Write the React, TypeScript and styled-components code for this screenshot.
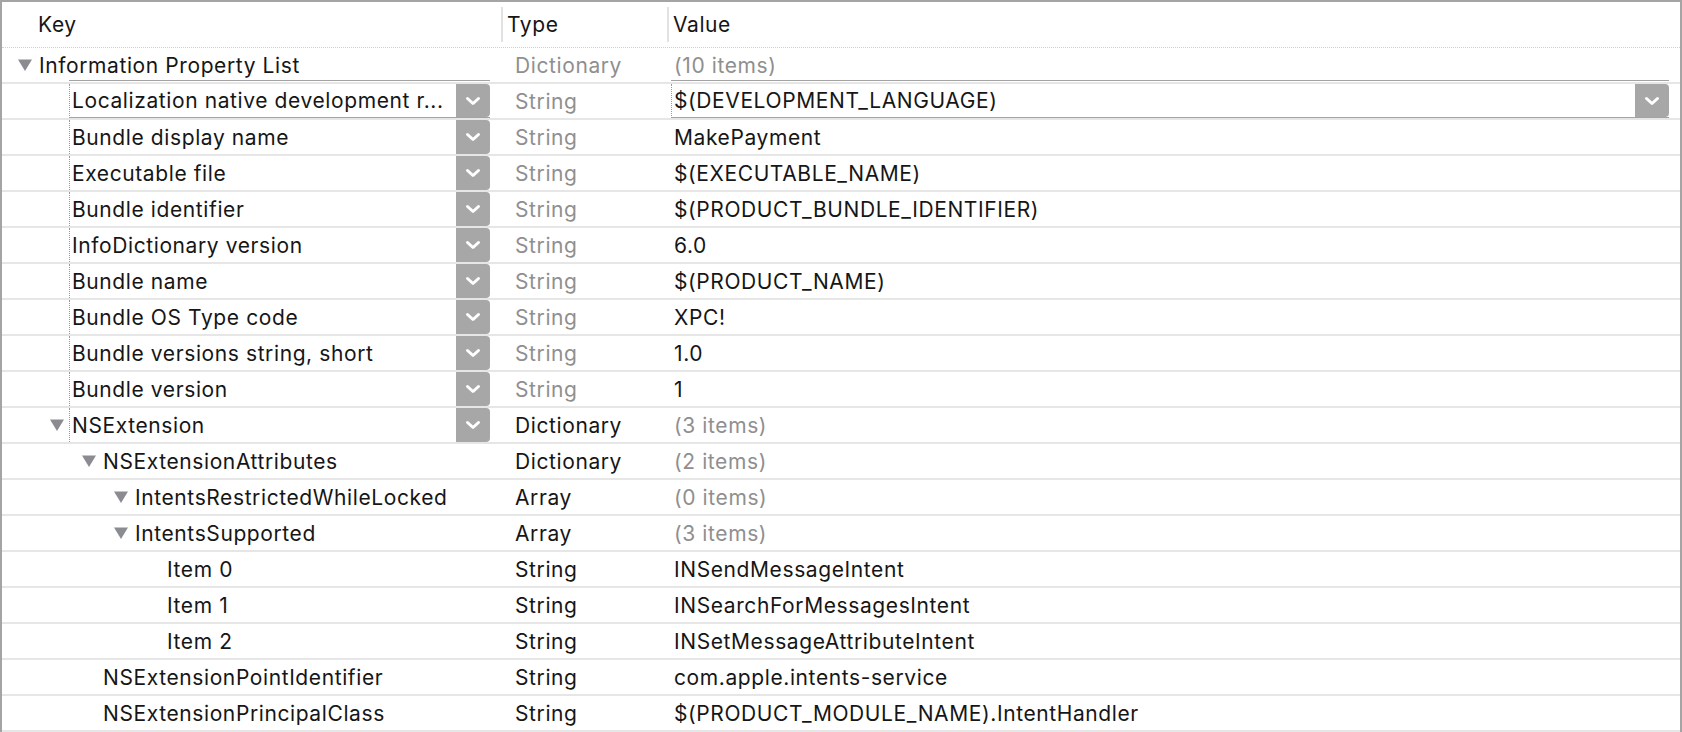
import React from "react";
import styled, { createGlobalStyle, css } from "styled-components";

const GlobalStyle = createGlobalStyle`
  html, body {
    margin: 0;
    padding: 0;
    background: #ffffff;
    overflow: hidden;
  }
  body {
    font-family: Inter, "Liberation Sans", Arial, sans-serif;
    -webkit-font-smoothing: antialiased;
  }
`;

const COLS = "499px 166px 1fr";

const Frame = styled.div`
  box-sizing: border-box;
  width: 1682px;
  height: 732px;
  border-top: 2px solid #a4a4a4;
  border-left: 2px solid #a4a4a4;
  border-right: 2px solid #a4a4a4;
  background: #ffffff;
  overflow: hidden;
  font-size: 21px;
  letter-spacing: 0.6px;
  color: #161616;
`;

const Header = styled.div`
  display: grid;
  grid-template-columns: ${COLS};
  height: 46px;
  box-sizing: border-box;
  border-bottom: 1px dotted #cfcfcf;
`;

const HeaderCell = styled.div<{ $pad: number }>`
  display: flex;
  align-items: center;
  padding-left: ${(p) => p.$pad}px;
  color: #161616;
`;

const HeaderDivider = styled.span`
  width: 2px;
  height: 35px;
  background: #e2e2e2;
  margin-right: 4px;
`;

const Row = styled.div`
  display: grid;
  grid-template-columns: ${COLS};
  height: 36px;
  box-sizing: border-box;
  border-bottom: 2px solid #e6e6e6;
`;

const KeyCell = styled.div<{ $depth: number }>`
  display: flex;
  align-items: stretch;
  padding-left: ${(p) => 16 + p.$depth * 32}px;
  padding-right: 11px;
  min-width: 0;
`;

const Disclosure = styled.span`
  flex: 0 0 21px;
  display: flex;
  align-items: center;
`;

const KeyText = styled.span`
  display: flex;
  align-items: center;
  white-space: nowrap;
`;

const Field = styled.div<{ $editing?: boolean }>`
  flex: 1;
  display: flex;
  align-items: stretch;
  margin-left: -2px;
  border-left: 1px dotted #9a9a9a;
  min-width: 0;
  box-sizing: border-box;
  ${(p) =>
    p.$editing &&
    css`
      border-bottom: 1px solid #a3a3a3;
      box-shadow: 0 -2px 0 #e6e6e6, 0 -3px 0 #ffffff, 0 -4px 0 #a3a3a3;
    `}
`;

const FieldText = styled.span`
  flex: 1;
  display: flex;
  align-items: center;
  padding-left: 2px;
  white-space: nowrap;
  overflow: hidden;
  min-width: 0;
`;

const PopupButton = styled.span`
  flex: 0 0 34px;
  display: flex;
  align-items: center;
  justify-content: center;
  background: #a7a7a7;
  border-radius: 0 4px 4px 0;
`;

const TypeCell = styled.div<{ $muted?: boolean }>`
  display: flex;
  align-items: center;
  padding-left: 14px;
  color: ${(p) => (p.$muted ? "#8f8f8f" : "#161616")};
  white-space: nowrap;
`;

const ValueCell = styled.div<{ $muted?: boolean; $field?: boolean }>`
  display: flex;
  align-items: ${(p) => (p.$field ? "stretch" : "center")};
  padding-left: ${(p) => (p.$field ? 6 : 7)}px;
  padding-right: 11px;
  color: ${(p) => (p.$muted ? "#8f8f8f" : "#161616")};
  white-space: nowrap;
  min-width: 0;
`;

const Triangle = () => (
  <svg width="14" height="12" viewBox="0 0 14 12">
    <polygon points="0,0.5 14,0.5 7,12" fill="#8a8c92" />
  </svg>
);

const Chevron = () => (
  <svg width="16" height="10" viewBox="0 0 16 10">
    <polyline
      points="2.5,2.5 8,7.5 13.5,2.5"
      fill="none"
      stroke="#ffffff"
      strokeWidth="3"
      strokeLinecap="round"
      strokeLinejoin="round"
    />
  </svg>
);

type RowData = {
  depth: number;
  key: string;
  open?: boolean;
  field?: boolean;
  editing?: boolean;
  type: string;
  typeMuted?: boolean;
  value: string;
  valueMuted?: boolean;
};

const simple = (key: string, value: string): RowData => ({
  depth: 1,
  key,
  field: true,
  type: "String",
  typeMuted: true,
  value,
});

const rows: RowData[] = [
  {
    depth: 0,
    key: "Information Property List",
    open: true,
    type: "Dictionary",
    typeMuted: true,
    value: "(10 items)",
    valueMuted: true,
  },
  {
    ...simple("Localization native development r...", "$(DEVELOPMENT_LANGUAGE)"),
    editing: true,
  },
  simple("Bundle display name", "MakePayment"),
  simple("Executable file", "$(EXECUTABLE_NAME)"),
  simple("Bundle identifier", "$(PRODUCT_BUNDLE_IDENTIFIER)"),
  simple("InfoDictionary version", "6.0"),
  simple("Bundle name", "$(PRODUCT_NAME)"),
  simple("Bundle OS Type code", "XPC!"),
  simple("Bundle versions string, short", "1.0"),
  simple("Bundle version", "1"),
  {
    depth: 1,
    key: "NSExtension",
    open: true,
    field: true,
    type: "Dictionary",
    value: "(3 items)",
    valueMuted: true,
  },
  {
    depth: 2,
    key: "NSExtensionAttributes",
    open: true,
    type: "Dictionary",
    value: "(2 items)",
    valueMuted: true,
  },
  {
    depth: 3,
    key: "IntentsRestrictedWhileLocked",
    open: true,
    type: "Array",
    value: "(0 items)",
    valueMuted: true,
  },
  {
    depth: 3,
    key: "IntentsSupported",
    open: true,
    type: "Array",
    value: "(3 items)",
    valueMuted: true,
  },
  { depth: 4, key: "Item 0", type: "String", value: "INSendMessageIntent" },
  { depth: 4, key: "Item 1", type: "String", value: "INSearchForMessagesIntent" },
  { depth: 4, key: "Item 2", type: "String", value: "INSetMessageAttributeIntent" },
  {
    depth: 2,
    key: "NSExtensionPointIdentifier",
    type: "String",
    value: "com.apple.intents-service",
  },
  {
    depth: 2,
    key: "NSExtensionPrincipalClass",
    type: "String",
    value: "$(PRODUCT_MODULE_NAME).IntentHandler",
  },
];

const PlistRow = ({ row }: { row: RowData }) => (
  <Row>
    <KeyCell $depth={row.depth}>
      <Disclosure>{row.open && <Triangle />}</Disclosure>
      {row.field ? (
        <Field $editing={row.editing}>
          <FieldText>{row.key}</FieldText>
          <PopupButton>
            <Chevron />
          </PopupButton>
        </Field>
      ) : (
        <KeyText>{row.key}</KeyText>
      )}
    </KeyCell>
    <TypeCell $muted={row.typeMuted}>{row.type}</TypeCell>
    {row.editing ? (
      <ValueCell $field>
        <Field $editing>
          <FieldText>{row.value}</FieldText>
          <PopupButton>
            <Chevron />
          </PopupButton>
        </Field>
      </ValueCell>
    ) : (
      <ValueCell $muted={row.valueMuted}>{row.value}</ValueCell>
    )}
  </Row>
);

export default function App() {
  return (
    <>
      <GlobalStyle />
      <Frame>
        <Header>
          <HeaderCell $pad={36}>Key</HeaderCell>
          <HeaderCell $pad={0}>
            <HeaderDivider />
            Type
          </HeaderCell>
          <HeaderCell $pad={0}>
            <HeaderDivider />
            Value
          </HeaderCell>
        </Header>
        {rows.map((r, i) => (
          <PlistRow key={i} row={r} />
        ))}
      </Frame>
    </>
  );
}
